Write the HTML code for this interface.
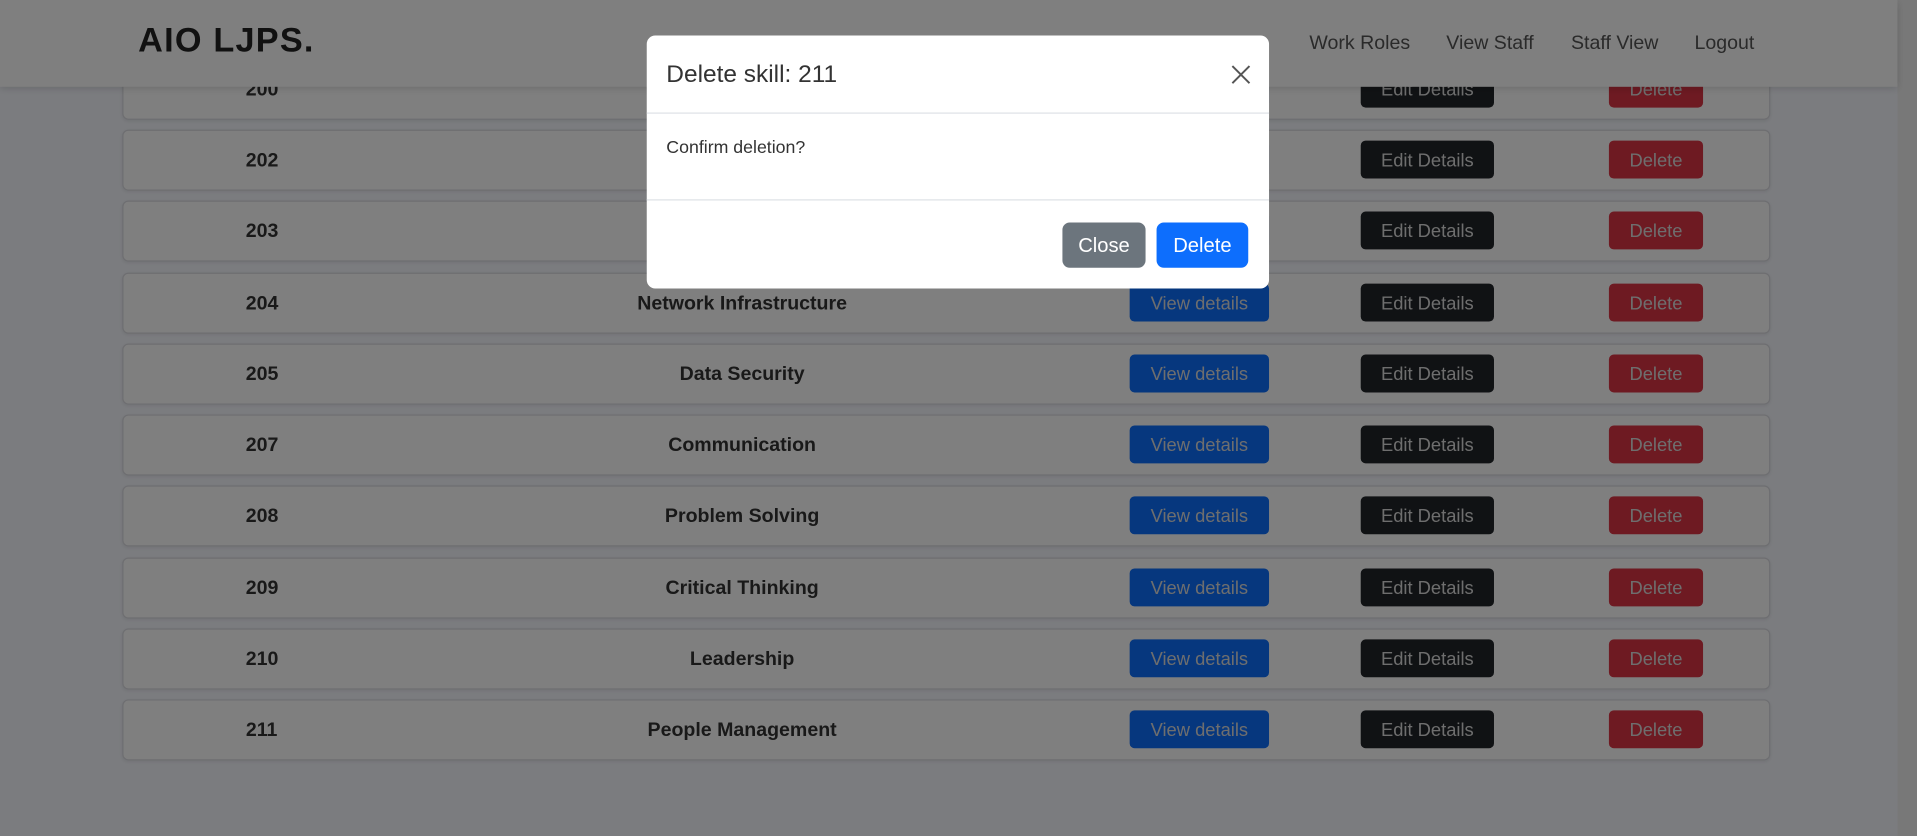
<!DOCTYPE html>
<html><head><meta charset="utf-8"><style>
html,body{margin:0;padding:0;width:1917px;height:836px;overflow:hidden;background:#f6f8ff;font-family:"Liberation Sans",sans-serif;}
#s{position:absolute;left:0;top:0;width:1568px;height:684px;transform:scale(1.22258);transform-origin:0 0;}
.nav{position:absolute;left:0;top:0;width:1552px;height:71px;background:#fff;box-shadow:0 2px 6px rgba(0,0,0,.15);z-index:2}
.logo{position:absolute;left:113px;top:17px;font-size:28px;font-weight:bold;color:#222;letter-spacing:1px}
.nl{position:absolute;top:27px;font-size:16px;color:#555}
.sb{position:absolute;left:1552px;top:0;width:16px;height:684px;background:#f1f1f1}
.row{position:absolute;left:100px;width:1346px;height:48px;background:#fff;border:1px solid #dcdde2;border-radius:5px;box-shadow:0 1px 3px rgba(0,0,0,.08)}
.id{position:absolute;left:100px;width:26px;text-align:center;top:16px;font-weight:bold;font-size:16px;color:#333}
.nm{position:absolute;left:380px;width:252px;text-align:center;top:16px;font-weight:bold;font-size:16px;color:#333;white-space:nowrap}
.b{position:absolute;top:8px;height:31px;line-height:33px;border-radius:4px;color:#ddd;font-size:15px;text-align:center}
.v{left:823px;width:114px;background:#0d6efd}
.e{left:1012px;width:109px;background:#212529}
.d{left:1215px;width:77px;background:#dc3545}
.ov{position:absolute;left:0;top:0;width:1568px;height:684px;background:rgba(0,0,0,.5);z-index:5}
.m{position:absolute;left:529px;top:29px;width:509px;height:207px;background:#fff;border-radius:7px;z-index:6}
.mt{position:absolute;left:16px;top:21px;font-size:20px;font-weight:500;color:#333}
.hr{position:absolute;left:0;width:509px;height:1px;background:#dee2e6}
.mb{position:absolute;left:16px;top:84px;font-size:14.5px;color:#333}
.mbtn{position:absolute;top:153px;height:37px;line-height:39px;border-radius:6px;color:#fff;font-size:16.5px;text-align:center}
</style></head><body><div id="s">
<div class="nav"><div class="logo">AIO LJPS.</div>
<div class="nl" style="left:1071px">Work Roles</div>
<div class="nl" style="left:1183px">View Staff</div>
<div class="nl" style="left:1285px">Staff View</div>
<div class="nl" style="left:1386px">Logout</div></div>
<div class="sb"></div>

<div class="row" style="top:48px"><div class="id">200</div><div class="nm">Data Analytics</div><div class="b v">View details</div><div class="b e">Edit Details</div><div class="b d">Delete</div></div>
<div class="row" style="top:106px"><div class="id">202</div><div class="nm">Data Management</div><div class="b v">View details</div><div class="b e">Edit Details</div><div class="b d">Delete</div></div>
<div class="row" style="top:164px"><div class="id">203</div><div class="nm">IT Support</div><div class="b v">View details</div><div class="b e">Edit Details</div><div class="b d">Delete</div></div>
<div class="row" style="top:223px"><div class="id">204</div><div class="nm">Network Infrastructure</div><div class="b v">View details</div><div class="b e">Edit Details</div><div class="b d">Delete</div></div>
<div class="row" style="top:281px"><div class="id">205</div><div class="nm">Data Security</div><div class="b v">View details</div><div class="b e">Edit Details</div><div class="b d">Delete</div></div>
<div class="row" style="top:339px"><div class="id">207</div><div class="nm">Communication</div><div class="b v">View details</div><div class="b e">Edit Details</div><div class="b d">Delete</div></div>
<div class="row" style="top:397px"><div class="id">208</div><div class="nm">Problem Solving</div><div class="b v">View details</div><div class="b e">Edit Details</div><div class="b d">Delete</div></div>
<div class="row" style="top:456px"><div class="id">209</div><div class="nm">Critical Thinking</div><div class="b v">View details</div><div class="b e">Edit Details</div><div class="b d">Delete</div></div>
<div class="row" style="top:514px"><div class="id">210</div><div class="nm">Leadership</div><div class="b v">View details</div><div class="b e">Edit Details</div><div class="b d">Delete</div></div>
<div class="row" style="top:572px"><div class="id">211</div><div class="nm">People Management</div><div class="b v">View details</div><div class="b e">Edit Details</div><div class="b d">Delete</div></div>

<div class="ov"></div>
<div class="m">
<div class="mt">Delete skill: 211</div>
<svg style="position:absolute;left:478px;top:24px" width="16" height="16" viewBox="0 0 16 16"><path d="M1 1L15 15M15 1L1 15" stroke="#555" stroke-width="1.6"/></svg>
<div class="hr" style="top:63px"></div>
<div class="mb">Confirm deletion?</div>
<div class="hr" style="top:134px"></div>
<div class="mbtn" style="left:340px;width:68px;background:#6c757d">Close</div>
<div class="mbtn" style="left:417px;width:75px;background:#0d6efd">Delete</div>
</div>
</div></body></html>
